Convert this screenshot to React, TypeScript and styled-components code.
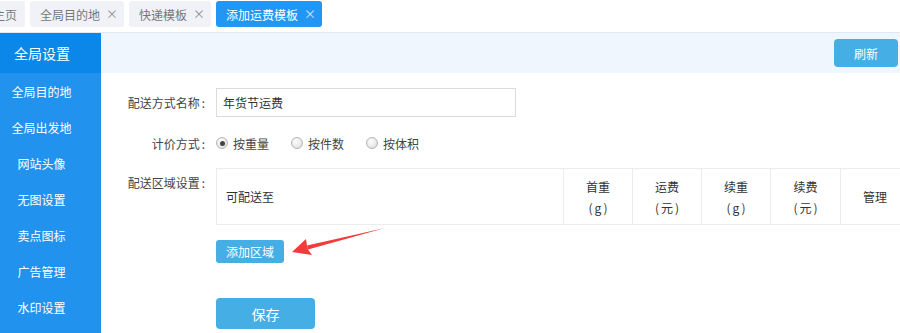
import React from "react"
import styled, { createGlobalStyle } from "styled-components"

const GlobalStyle = createGlobalStyle`
  html, body {
    margin: 0;
    padding: 0;
    background: #fff;
    font-family: "Noto Sans CJK SC", "Noto Sans", "Liberation Sans", sans-serif;
    color: #333;
  }
  body {
    width: 900px;
    height: 333px;
    overflow: hidden;
  }
`

const Page = styled.div`
  width: 900px;
  height: 333px;
  overflow: hidden;
  display: flex;
  flex-direction: column;
`

const TabBar = styled.div`
  height: 33px;
  border-bottom: 1px solid #dfe8f3;
  display: flex;
  align-items: flex-start;
  gap: 5px;
  padding-top: 1px;
  box-sizing: border-box;
  margin-left: -17px;
  flex-shrink: 0;
`

const Tab = styled.div<{ $active?: boolean }>`
  height: 26px;
  display: flex;
  align-items: center;
  padding: 0 8px 0 10px;
  border-radius: 3px;
  font-size: 12px;
  white-space: nowrap;
  background: ${(p) => (p.$active ? "#2196f3" : "#f0f2f7")};
  color: ${(p) => (p.$active ? "#fff" : "#777")};
`

const TabClose = styled.span`
  width: 10px;
  margin-left: 6px;
  font-size: 12px;
  line-height: 1;
  text-align: center;
  opacity: 0.8;
`

const Body = styled.div`
  flex: 1;
  display: flex;
  min-height: 0;
`

const Sidebar = styled.div`
  width: 101px;
  flex-shrink: 0;
  background: #2192ee;
  display: flex;
  flex-direction: column;
`

const SideHead = styled.div`
  height: 40px;
  background: #0a87e8;
  color: #fff;
  font-size: 14px;
  display: flex;
  align-items: center;
  padding-left: 14px;
`

const SideItem = styled.div`
  height: 36px;
  display: flex;
  align-items: center;
  justify-content: center;
  padding-right: 18px;
  color: #fff;
  font-size: 12px;
`

const Main = styled.div`
  flex: 1;
  display: flex;
  flex-direction: column;
  min-width: 0;
`

const Toolbar = styled.div`
  height: 40px;
  background: #eff6fe;
  display: flex;
  align-items: center;
  justify-content: flex-end;
  padding-right: 2px;
  flex-shrink: 0;
`

const Button = styled.button<{ $w: number; $h: number }>`
  width: ${(p) => p.$w}px;
  height: ${(p) => p.$h}px;
  border: none;
  border-radius: 4px;
  background: #45aee4;
  color: #fff;
  font-family: inherit;
  font-size: ${(p) => (p.$h > 28 ? 14 : 12)}px;
  padding: 0;
  cursor: pointer;
`

const Form = styled.div`
  position: relative;
  padding-top: 15px;
  display: flex;
  flex-direction: column;
`

const Row = styled.div<{ $top?: boolean; $h?: number }>`
  display: flex;
  align-items: ${(p) => (p.$top ? "flex-start" : "center")};
  min-height: ${(p) => p.$h ?? 0}px;
`

const Label = styled.div<{ $pt?: number }>`
  width: 105px;
  padding-top: ${(p) => p.$pt ?? 0}px;
  margin-right: 10px;
  text-align: right;
  font-size: 12px;
  color: #444;
  flex-shrink: 0;
  white-space: nowrap;
`

const Colon = styled.span`
  margin-left: 2px;
  margin-right: 1px;
`

const TextInput = styled.div`
  width: 300px;
  height: 29px;
  box-sizing: border-box;
  border: 1px solid #dcdcdc;
  display: flex;
  align-items: center;
  padding-left: 6px;
  font-size: 12px;
  color: #333;
`

const RadioGroup = styled.div`
  display: flex;
  align-items: center;
`

const RadioOpt = styled.label`
  display: flex;
  align-items: center;
  width: 75px;
  font-size: 12px;
  color: #444;
`

const RadioDot = styled.span<{ $on?: boolean }>`
  width: 12px;
  height: 12px;
  box-sizing: border-box;
  border-radius: 50%;
  border: 1px solid #b5b5b5;
  background: radial-gradient(circle at 40% 35%, #fdfdfd, #d9d9d9);
  margin-right: 5px;
  display: flex;
  align-items: center;
  justify-content: center;
  &::after {
    content: "";
    display: ${(p) => (p.$on ? "block" : "none")};
    width: 5px;
    height: 5px;
    border-radius: 50%;
    background: #444;
  }
`

const AreaBlock = styled.div`
  display: flex;
  flex-direction: column;
  flex: 1;
  min-width: 0;
`

const Table = styled.div`
  width: 694px;
  height: 57px;
  box-sizing: border-box;
  border: 1px solid #ececec;
  display: grid;
  grid-template-columns: 346px 69px 69px 69px 70px 1fr;
`

const Cell = styled.div<{ $left?: boolean }>`
  border-left: 1px solid #ececec;
  &:first-child {
    border-left: none;
  }
  display: flex;
  flex-direction: column;
  align-items: ${(p) => (p.$left ? "flex-start" : "center")};
  justify-content: center;
  padding-left: ${(p) => (p.$left ? 9 : 0)}px;
  font-size: 12px;
  line-height: 21px;
  color: #333;
`

const Unit = styled.span`
  letter-spacing: 2px;
  padding-left: 2px;
`

const AddRow = styled.div`
  margin-top: 13px;
`

const SaveRow = styled.div`
  margin-top: 35px;
  padding-left: 115px;
`

const Arrow = styled.svg`
  position: absolute;
  left: 186px;
  top: 155px;
  overflow: visible;
`

const menu = ["全局目的地", "全局出发地", "网站头像", "无图设置", "卖点图标", "广告管理", "水印设置"]
const cols: [string, string][] = [
  ["首重", "(g)"],
  ["运费", "(元)"],
  ["续重", "(g)"],
  ["续费", "(元)"],
]

export default function App() {
  return (
    <Page>
      <GlobalStyle />
      <TabBar>
        <Tab>主页</Tab>
        <Tab>
          全局目的地<TabClose>×</TabClose>
        </Tab>
        <Tab>
          快递模板<TabClose>×</TabClose>
        </Tab>
        <Tab $active>
          添加运费模板<TabClose>×</TabClose>
        </Tab>
      </TabBar>
      <Body>
        <Sidebar>
          <SideHead>全局设置</SideHead>
          {menu.map((m) => (
            <SideItem key={m}>{m}</SideItem>
          ))}
        </Sidebar>
        <Main>
          <Toolbar>
            <Button $w={64} $h={28}>
              刷新
            </Button>
          </Toolbar>
          <Form>
            <Row $h={29}>
              <Label>
                配送方式名称<Colon>:</Colon>
              </Label>
              <TextInput>年货节运费</TextInput>
            </Row>
            <Row $h={22} style={{ marginTop: 15 }}>
              <Label>
                计价方式<Colon>:</Colon>
              </Label>
              <RadioGroup>
                <RadioOpt>
                  <RadioDot $on />
                  按重量
                </RadioOpt>
                <RadioOpt>
                  <RadioDot />
                  按件数
                </RadioOpt>
                <RadioOpt>
                  <RadioDot />
                  按体积
                </RadioOpt>
              </RadioGroup>
            </Row>
            <Row $top style={{ marginTop: 14 }}>
              <Label $pt={6}>
                配送区域设置<Colon>:</Colon>
              </Label>
              <AreaBlock>
                <Table>
                  <Cell $left>可配送至</Cell>
                  {cols.map(([a, b]) => (
                    <Cell key={a}>
                      <span>{a}</span>
                      <Unit>{b}</Unit>
                    </Cell>
                  ))}
                  <Cell>管理</Cell>
                </Table>
                <AddRow>
                  <Button $w={68} $h={23} style={{ borderRadius: 3 }}>
                    添加区域
                  </Button>
                </AddRow>
              </AreaBlock>
            </Row>
            <SaveRow>
              <Button $w={99} $h={31}>
                保存
              </Button>
            </SaveRow>
            <Arrow width="100" height="30" viewBox="0 0 100 30">
              <polygon points="98,0 20,17.5 21,21.5" fill="#f23b3b" />
              <polygon points="5,24 19,11 20,17.5 21,21.5 25,27" fill="#f23b3b" />
            </Arrow>
          </Form>
        </Main>
      </Body>
    </Page>
  )
}
